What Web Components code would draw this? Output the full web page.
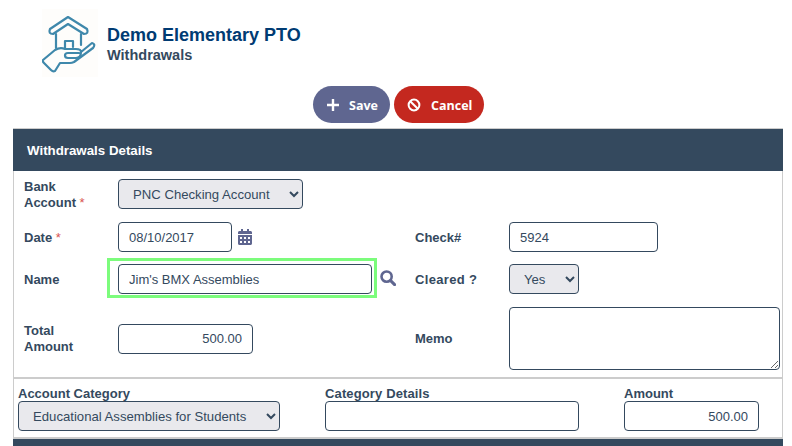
<!DOCTYPE html>
<html lang="en">
<head>
<meta charset="utf-8">
<title>Withdrawals</title>
<style>
  html, body { margin: 0; height: 446px; overflow: hidden; background: #fff; }
  body { font-family: "Liberation Sans", Arial, sans-serif; color: #34495e; }
</style>
</head>
<body>
<pto-header title="Demo Elementary PTO" subtitle="Withdrawals"></pto-header>
<pto-actions>
  <pto-button variant="save" icon="plus">Save</pto-button>
  <pto-button variant="cancel" icon="ban">Cancel</pto-button>
</pto-actions>
<pto-panel heading="Withdrawals Details">
  <pto-details>
    <pto-label required block style="grid-area: 1 / 1">Bank Account</pto-label>
    <pto-select style="grid-area: 1 / 2" width="185" value="PNC Checking Account"></pto-select>

    <pto-label required style="grid-area: 2 / 1">Date</pto-label>
    <pto-input style="grid-area: 2 / 2" width="114" value="08/10/2017" icon="calendar"></pto-input>
    <pto-label style="grid-area: 2 / 3">Check#</pto-label>
    <pto-input style="grid-area: 2 / 4" width="149" value="5924"></pto-input>

    <pto-label style="grid-area: 3 / 1">Name</pto-label>
    <pto-input style="grid-area: 3 / 2" width="254" value="Jim's BMX Assemblies" icon="search" focused></pto-input>
    <pto-label style="grid-area: 3 / 3; letter-spacing: .35px">Cleared ?</pto-label>
    <pto-select style="grid-area: 3 / 4" width="70" value="Yes"></pto-select>

    <pto-label middle style="grid-area: 4 / 1">Total Amount</pto-label>
    <pto-input middle style="grid-area: 4 / 2" width="135" value="500.00" align="right"></pto-input>
    <pto-label middle style="grid-area: 4 / 3">Memo</pto-label>
    <pto-memo style="grid-area: 4 / 4"></pto-memo>
  </pto-details>
  <pto-lines>
    <pto-stack label="Account Category" style="width: 262px">
      <pto-select width="262" value="Educational Assemblies for Students"></pto-select>
    </pto-stack>
    <pto-stack label="Category Details" style="width: 254px; letter-spacing: .13px">
      <pto-input width="254" value=""></pto-input>
    </pto-stack>
    <pto-stack label="Amount" style="width: 135px">
      <pto-input width="135" value="500.00" align="right"></pto-input>
    </pto-stack>
  </pto-lines>
</pto-panel>

<script>
const ICONS = {
  plus: '<svg width="12" height="12" viewBox="0 0 12 12"><path d="M6 .5v11M.5 6h11" stroke="#fff" stroke-width="2.4" stroke-linecap="round" fill="none"/></svg>',
  ban: '<svg width="14" height="14" viewBox="0 0 14 14"><circle cx="7" cy="7" r="5.4" stroke="#fff" stroke-width="2" fill="none"/><path d="M3.2 3.2l7.6 7.6" stroke="#fff" stroke-width="2" fill="none"/></svg>',
  calendar: '<svg width="14" height="16" viewBox="0 0 14 16"><path fill="#5f6690" fill-rule="evenodd" d="M3 0h2v2h4V0h2v2h1.5C13.3 2 14 2.700 14 3.500V5H0V3.500C0 2.700 .7 2 1.500 2H3zM0 6h14v8.500c0 .8-.7 1.500-1.500 1.500h-11C.7 16 0 15.300 0 14.500zM2 8v2h2V8zm4 0v2h2V8zm4 0v2h2V8zM2 12v2h2v-2zm4 0v2h2v-2zm4 0v2h2v-2z"/></svg>',
  search: '<svg width="16" height="16" viewBox="0 0 16 16"><circle cx="6.600" cy="6.600" r="5.100" stroke="#5f6690" stroke-width="2.600" fill="none"/><path d="M10.600 10.600l4 4" stroke="#5f6690" stroke-width="3" stroke-linecap="round"/></svg>'
};

class PtoHeader extends HTMLElement {
  connectedCallback() {
    this.attachShadow({ mode: 'open' }).innerHTML = `
      <style>
        :host { display: flex; align-items: flex-start; height: 86px; box-sizing: border-box; padding: 9px 0 0 42px; gap: 9px; }
        svg { display: block; flex: none; }
        .text { padding-top: 15px; }
        h1 { margin: 0; font: bold 18px/22px "Liberation Sans", Arial, sans-serif; color: #003b73; }
        h2 { margin: 0; font: bold 14.500px/18px "Liberation Sans", Arial, sans-serif; color: #34495e; }
      </style>
      <svg width="56" height="68" viewBox="42 9 56 68">
        <rect x="42" y="9" width="56" height="68" fill="#fefdfb"/>
        <g fill="none" stroke="#3f88ab" stroke-width="2.200" stroke-linejoin="round" stroke-linecap="round">
          <path d="M50 29 68 17 87 29Q89 34 84 34L68 24 53 34Q48 34 50 29Z"/>
          <path d="M56 34V48M81 34V45"/>
          <path d="M65 48V41H73V47"/>
          <path d="M43 60 55 50Q60 47 65 49H76Q81 49 81 52L92 43Q96 44 93 48L74 62Q72 63 70 63H60L55 71Q53 72 51 70L44 63Q42 61 43 60Z"/>
          <path d="M81 52Q81 58 76 58H68Q65 58 65 55.500 65 53 68 53H79"/>
        </g>
      </svg>
      <div class="text">
        <h1>${this.getAttribute('title')}</h1>
        <h2>${this.getAttribute('subtitle')}</h2>
      </div>`;
  }
}

class PtoActions extends HTMLElement {
  connectedCallback() {
    this.attachShadow({ mode: 'open' }).innerHTML = `
      <style>
        :host { display: flex; height: 37px; padding-left: 313px; gap: 4px; margin-bottom: 5px; }
      </style>
      <slot></slot>`;
  }
}

class PtoButton extends HTMLElement {
  connectedCallback() {
    const icon = ICONS[this.getAttribute('icon')];
    this.attachShadow({ mode: 'open' }).innerHTML = `
      <style>
        :host { display: flex; align-items: center; height: 37px; border-radius: 19px; color: #fff;
          font: 700 12.500px "Open Sans", sans-serif; box-sizing: border-box; padding-top: 1px; }
        :host([variant="save"]) { width: 77px; padding-left: 14px; gap: 10px; background: #5f6690; }
        :host([variant="cancel"]) { width: 90px; padding-left: 13px; gap: 10px; background: #c4281f; }
        svg { display: block; }
      </style>
      ${icon}<slot></slot>`;
  }
}

class PtoPanel extends HTMLElement {
  connectedCallback() {
    this.attachShadow({ mode: 'open' }).innerHTML = `
      <style>
        :host { display: block; width: 770px; margin-left: 13px; box-sizing: border-box;
          border-left: 1px solid #ccc; border-right: 1px solid #ccc; }
        header { height: 42px; margin: 0 -1px; background: #34495e; border-top: 1px solid #ccc; color: #fff;
          font: bold 13.300px/43px "Liberation Sans", Arial, sans-serif; padding-left: 14px; }
        footer { height: 7px; margin: 0 -1px; background: #34495e; border-top: 2px solid #ccc; }
      </style>
      <header>${this.getAttribute('heading')}</header>
      <slot></slot>
      <footer></footer>`;
  }
}

class PtoDetails extends HTMLElement {
  connectedCallback() {
    this.attachShadow({ mode: 'open' }).innerHTML = `
      <style>
        :host { display: grid; grid-template-columns: 94px 297px 94px 271px;
          grid-template-rows: 31px 30px 31px 63px; row-gap: 12px; align-items: start;
          padding: 8px 0 7px 10px; border-bottom: 2px solid #ccc; }
      </style>
      <slot></slot>`;
  }
}

class PtoLabel extends HTMLElement {
  connectedCallback() {
    const star = this.hasAttribute('required') ? '<span> *</span>' : '';
    this.attachShadow({ mode: 'open' }).innerHTML = `
      <style>
        :host { display: block; padding-top: 8px; font: bold 13px/16px "Liberation Sans", Arial, sans-serif; color: #34495e; max-width: 74px; }
        :host([block]) { padding-top: 0; }
        :host([middle]) { padding-top: 0; align-self: center; }
        span { color: #d9534f; font-weight: normal; }
      </style>
      <slot></slot>${star}`;
  }
}

class PtoInput extends HTMLElement {
  connectedCallback() {
    const width = this.getAttribute('width');
    const value = this.getAttribute('value') || '';
    const align = this.getAttribute('align') || 'left';
    const icon = ICONS[this.getAttribute('icon')] || '';
    this.attachShadow({ mode: 'open' }).innerHTML = `
      <style>
        :host { display: flex; align-items: center; gap: 6px; }
        :host([middle]) { align-self: center; }
        :host([focused]) { gap: 3px; margin: -6px 0 -4px -11px; }
        :host([focused]) .ring { border: 3px solid #7cfc7c; padding: 3px 2px 1px 8px; }
        input { display: block; width: ${width}px; height: 30px; box-sizing: border-box; margin: 0;
          border: 1px solid #34495e; border-radius: 4px; padding: 0 10px; background: #fff; color: #34495e;
          font: 13px "Liberation Sans", Arial, sans-serif; text-align: ${align}; outline: none; }
        svg { display: block; flex: none; }
      </style>
      <div class="ring"><input type="text" value="${value}"></div>${icon}`;
  }
}

class PtoSelect extends HTMLElement {
  connectedCallback() {
    const width = this.getAttribute('width');
    this.attachShadow({ mode: 'open' }).innerHTML = `
      <style>
        :host { display: block; }
        select { display: block; width: ${width}px; height: 30px; box-sizing: border-box; margin: 0;
          border: 1px solid #34495e; border-radius: 4px; padding: 0 10px; background-color: #e9e9ed; color: #34495e;
          font: 13.150px "Liberation Sans", Arial, sans-serif; outline: none; }
      </style>
      <select><option>${this.getAttribute('value')}</option></select>`;
  }
}

class PtoMemo extends HTMLElement {
  connectedCallback() {
    this.attachShadow({ mode: 'open' }).innerHTML = `
      <style>
        :host { display: block; }
        textarea { display: block; width: 271px; height: 63px; box-sizing: border-box; margin: 0;
          border: 1px solid #34495e; border-radius: 4px; background: #fff; outline: none; }
      </style>
      <textarea></textarea>`;
  }
}

class PtoLines extends HTMLElement {
  connectedCallback() {
    this.attachShadow({ mode: 'open' }).innerHTML = `
      <style>
        :host { display: flex; padding: 8px 0 6px 4px; gap: 45px; }
      </style>
      <slot></slot>`;
  }
}

class PtoStack extends HTMLElement {
  connectedCallback() {
    this.attachShadow({ mode: 'open' }).innerHTML = `
      <style>
        :host { display: block; }
        label { display: block; font: bold 13px/14px "Liberation Sans", Arial, sans-serif; color: #34495e; }
      </style>
      <label>${this.getAttribute('label')}</label>
      <slot></slot>`;
  }
}

customElements.define('pto-header', PtoHeader);
customElements.define('pto-actions', PtoActions);
customElements.define('pto-button', PtoButton);
customElements.define('pto-panel', PtoPanel);
customElements.define('pto-details', PtoDetails);
customElements.define('pto-label', PtoLabel);
customElements.define('pto-input', PtoInput);
customElements.define('pto-select', PtoSelect);
customElements.define('pto-memo', PtoMemo);
customElements.define('pto-lines', PtoLines);
customElements.define('pto-stack', PtoStack);
</script>
</body>
</html>
